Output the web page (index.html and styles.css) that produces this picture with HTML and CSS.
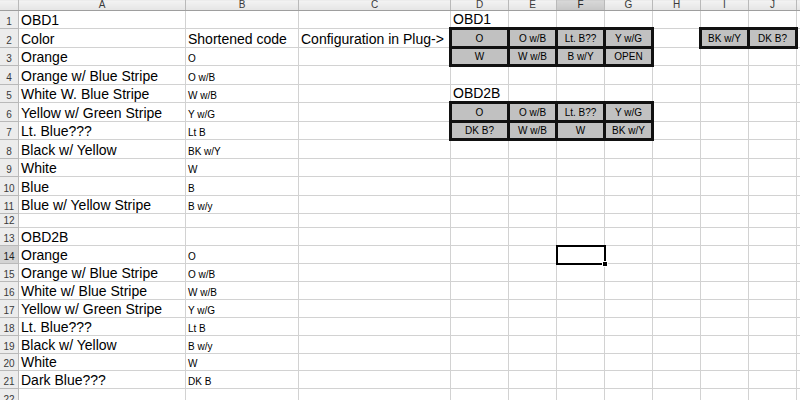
FILE: index.html
```html
<!DOCTYPE html>
<html>
<head>
<meta charset="utf-8">
<link rel="stylesheet" href="styles.css">
</head>
<body>
<table class="sheet">
<colgroup>
<col class="c-rh"><col class="c-a"><col class="c-b"><col class="c-c"><col class="c-d">
<col class="c-n"><col class="c-n"><col class="c-n"><col class="c-n"><col class="c-n"><col class="c-n"><col class="c-n">
</colgroup>
<tr class="hdr">
<th class="corner"></th><th>A</th><th>B</th><th>C</th><th>D</th><th>E</th><th class="hsel">F</th><th>G</th><th>H</th><th>I</th><th>J</th><th>K</th>
</tr>
<tr class="r18"><th>1</th><td>OBD1</td><td></td><td></td><td>OBD1</td><td></td><td></td><td></td><td></td><td></td><td></td><td></td></tr>
<tr class="r19"><th>2</th><td>Color</td><td>Shortened code</td><td>Configuration in Plug-&gt;</td><td class="bx">O</td><td class="bx">O w/B</td><td class="bx">Lt. B??</td><td class="bx">Y w/G</td><td></td><td class="bx">BK w/Y</td><td class="bx">DK B?</td><td></td></tr>
<tr class="r18"><th>3</th><td>Orange</td><td class="s">O</td><td></td><td class="bx">W</td><td class="bx">W w/B</td><td class="bx">B w/Y</td><td class="bx">OPEN</td><td></td><td></td><td></td><td></td></tr>
<tr class="r19"><th>4</th><td>Orange w/ Blue Stripe</td><td class="s">O w/B</td><td></td><td></td><td></td><td></td><td></td><td></td><td></td><td></td><td></td></tr>
<tr class="r18"><th>5</th><td>White W. Blue Stripe</td><td class="s">W w/B</td><td></td><td>OBD2B</td><td></td><td></td><td></td><td></td><td></td><td></td><td></td></tr>
<tr class="r19"><th>6</th><td>Yellow w/ Green Stripe</td><td class="s">Y w/G</td><td></td><td class="bx">O</td><td class="bx">O w/B</td><td class="bx">Lt. B??</td><td class="bx">Y w/G</td><td></td><td></td><td></td><td></td></tr>
<tr class="r18"><th>7</th><td>Lt. Blue???</td><td class="s">Lt B</td><td></td><td class="bx">DK B?</td><td class="bx">W w/B</td><td class="bx">W</td><td class="bx">BK w/Y</td><td></td><td></td><td></td><td></td></tr>
<tr class="r19"><th>8</th><td>Black w/ Yellow</td><td class="s">BK w/Y</td><td></td><td></td><td></td><td></td><td></td><td></td><td></td><td></td><td></td></tr>
<tr class="r18"><th>9</th><td>White</td><td class="s">W</td><td></td><td></td><td></td><td></td><td></td><td></td><td></td><td></td><td></td></tr>
<tr class="r19"><th>10</th><td>Blue</td><td class="s">B</td><td></td><td></td><td></td><td></td><td></td><td></td><td></td><td></td><td></td></tr>
<tr class="r18"><th>11</th><td>Blue w/ Yellow Stripe</td><td class="s">B w/y</td><td></td><td></td><td></td><td></td><td></td><td></td><td></td><td></td><td></td></tr>
<tr class="r14"><th>12</th><td></td><td></td><td></td><td></td><td></td><td></td><td></td><td></td><td></td><td></td><td></td></tr>
<tr class="r18"><th>13</th><td>OBD2B</td><td></td><td></td><td></td><td></td><td></td><td></td><td></td><td></td><td></td><td></td></tr>
<tr class="r18"><th class="hsel">14</th><td>Orange</td><td class="s">O</td><td></td><td></td><td></td><td class="sel"></td><td></td><td></td><td></td><td></td><td></td></tr>
<tr class="r18"><th>15</th><td>Orange w/ Blue Stripe</td><td class="s">O w/B</td><td></td><td></td><td></td><td></td><td></td><td></td><td></td><td></td><td></td></tr>
<tr class="r18"><th>16</th><td>White w/ Blue Stripe</td><td class="s">W w/B</td><td></td><td></td><td></td><td></td><td></td><td></td><td></td><td></td><td></td></tr>
<tr class="r18"><th>17</th><td>Yellow w/ Green Stripe</td><td class="s">Y w/G</td><td></td><td></td><td></td><td></td><td></td><td></td><td></td><td></td><td></td></tr>
<tr class="r18"><th>18</th><td>Lt. Blue???</td><td class="s">Lt B</td><td></td><td></td><td></td><td></td><td></td><td></td><td></td><td></td><td></td></tr>
<tr class="r18"><th>19</th><td>Black w/ Yellow</td><td class="s">B w/y</td><td></td><td></td><td></td><td></td><td></td><td></td><td></td><td></td><td></td></tr>
<tr class="r17"><th>20</th><td>White</td><td class="s">W</td><td></td><td></td><td></td><td></td><td></td><td></td><td></td><td></td><td></td></tr>
<tr class="r18"><th>21</th><td>Dark Blue???</td><td class="s">DK B</td><td></td><td></td><td></td><td></td><td></td><td></td><td></td><td></td><td></td></tr>
<tr class="r18"><th>22</th><td></td><td></td><td></td><td></td><td></td><td></td><td></td><td></td><td></td><td></td><td></td></tr>
</table>
</body>
</html>
```
FILE: styles.css
```css
html, body {
  margin: 0;
  padding: 0;
  background: #ffffff;
  overflow: hidden;
}

body {
  font-family: "Liberation Sans", Arial, sans-serif;
  color: #000;
}

.sheet {
  border-collapse: collapse;
  table-layout: fixed;
  width: 844px;
  margin-top: -1px;
  margin-left: -1px;
}

.c-rh { width: 19px; }
.c-a { width: 167px; }
.c-b { width: 113px; }
.c-c { width: 152px; }
.c-d { width: 58px; }
.c-n { width: 48px; }

.sheet td,
.sheet th {
  border: 1px solid #d2d2d2;
  padding: 0 2px;
  white-space: nowrap;
  overflow: visible;
  vertical-align: bottom;
  font-size: 14px;
  line-height: 16px;
  text-align: left;
  font-weight: normal;
}

.sheet td.s {
  font-size: 10px;
  line-height: 13px;
}

.sheet th {
  background: #ececec;
  border-color: #b9b9b9;
  color: #3a3a3a;
  font-size: 10px;
  line-height: 13px;
  text-align: center;
  padding: 0;
}

.hdr { height: 11px; }

.hdr th {
  line-height: 10px;
  height: 10px;
  overflow: hidden;
  vertical-align: bottom;
  background: linear-gradient(#f3f3f3, #e4e4e4);
  border-bottom-color: #9e9e9e;
}

.sheet th.hsel {
  background: #d3d3d3;
  color: #222;
}

.hdr th.hsel {
  background: linear-gradient(#d9d9d9, #c6c6c6);
}

.r19 { height: 19px; }
.r18 { height: 18px; }
.r17 { height: 17px; }
.r14 { height: 14px; }

.sheet td.bx {
  background: #c1c1c1;
  border: 3px solid #111;
  text-align: center;
  font-size: 10px;
  line-height: 13px;
  padding: 0 0 1px;
}

.sheet td.sel {
  border: 2px solid #000;
  position: relative;
}

.sheet td.sel::after {
  content: "";
  position: absolute;
  right: -4px;
  bottom: -4px;
  width: 4px;
  height: 4px;
  background: #000;
  border: 1px solid #fff;
}
```
